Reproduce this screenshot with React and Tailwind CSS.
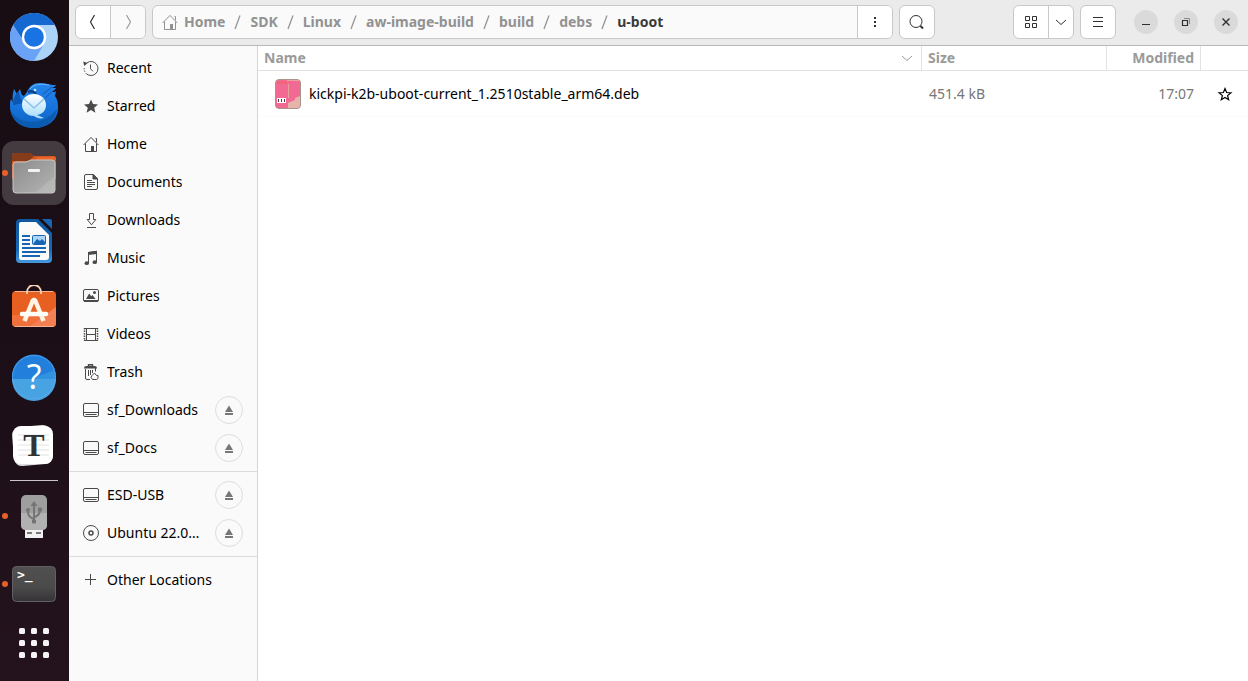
import { useState } from 'react';

function Icon({ children, className = '' }) {
  return (
    <svg
      width="16"
      height="16"
      viewBox="0 0 16 16"
      fill="none"
      stroke="currentColor"
      className={`shrink-0 ${className}`}
      aria-hidden="true"
    >
      {children}
    </svg>
  );
}

/* ---------- sidebar icons ---------- */

const RecentIcon = () => (
  <Icon>
    <path d="M4.2 2.6A7 7 0 1 1 3.4 13.8" />
    <path d="M1.2 8a7 7 0 0 0 2 5.6" strokeDasharray="1.4 1.2" />
    <path d="M.2 1.6 4.8 3 1.2 6z" fill="currentColor" stroke="none" />
    <path d="M7.5 4.5v4.2l2.4 2.6" />
  </Icon>
);

const StarIcon = () => (
  <Icon>
    <path d="m8 1.4 2 4.7 5 .4-3.8 3.3 1.2 4.9L8 12.1l-4.4 2.6 1.2-4.9L1 6.5l5-.4z" fill="currentColor" stroke="none" />
  </Icon>
);

const HomeIcon = () => (
  <Icon>
    <path d="M.6 9 8 1.4 15.4 9M2.5 7.5v8h11v-8M12.5 2.5h1v4" />
    <path d="M8 10h3v5.5H8z" fill="currentColor" stroke="none" />
  </Icon>
);

const DocumentsIcon = () => (
  <Icon>
    <path d="M3 .5h7.5l4 4V14q0 1.5-1.5 1.5H3q-1.5 0-1.5-1.5V2Q1.5.5 3 .5z" />
    <path d="M10 .5V5h4.5z" fill="currentColor" />
    <path d="M4 6.5h5M4 8.5h8M4 10.5h8M4 12.5h5" />
  </Icon>
);

const DownloadsIcon = () => (
  <Icon>
    <path d="M6.5 1.5h4v6h2.3l-4.3 5.3-4.3-5.3h2.3zM4 15.5h9" />
  </Icon>
);

const MusicIcon = () => (
  <Icon>
    <path d="M5.5 13V2.5l8-1V12" />
    <path d="M5 2 14 .8V4L5 5z" fill="currentColor" stroke="none" />
    <ellipse cx="3.8" cy="13.2" rx="2.2" ry="1.9" fill="currentColor" stroke="none" />
    <ellipse cx="11.8" cy="12.2" rx="2.2" ry="1.9" fill="currentColor" stroke="none" />
  </Icon>
);

const PicturesIcon = () => (
  <Icon>
    <rect x=".5" y="1.5" width="15" height="12" rx="1.5" />
    <path d="M1 12h14v2H1z" fill="currentColor" stroke="none" />
    <path d="m3 11 3.2-5.5 2 2.8L9.500 7l3 4z" fill="currentColor" stroke="none" />
    <circle cx="11.5" cy="4.5" r="1.5" fill="currentColor" stroke="none" />
  </Icon>
);

const VideosIcon = () => (
  <Icon>
    <path d="M1 2.5h14M1 14.5h14M3.5 2.5v12M12.5 2.5v12M3.5 8.5h9" />
    <path d="M1.5 2v13M14.5 2v13" strokeWidth="1.5" strokeDasharray="1.5 1" />
  </Icon>
);

const TrashIcon = () => (
  <Icon>
    <path d="M5.5 2.5V.8h4v1.7" strokeWidth="1.4" />
    <path d="M1 4q0-2 2.5-2h8Q14 2 14 4v.5H1z" fill="currentColor" stroke="none" />
    <path d="M2.5 5v9q0 1.5 1.5 1.5h3M12.5 4v3.5M5.5 6v6M7.5 6v5M9.5 6v3" />
    <path d="M9 11.5 11.5 9l2 2.5H15v3l-1.5 1h-4l-1.5-2z" />
  </Icon>
);

const DriveIcon = () => (
  <Icon>
    <rect x=".5" y="1.5" width="15" height="13" rx="1.5" />
    <path d="M1 10.5h14M2.5 12.5h11" />
  </Icon>
);

const DiscIcon = () => (
  <Icon>
    <circle cx="8" cy="8" r="7.5" />
    <circle cx="8" cy="8" r="2" strokeWidth="1.5" />
  </Icon>
);

const PlusIcon = () => (
  <Icon>
    <path d="M7.5 2v11M2 7.5h11" />
  </Icon>
);

const EjectIcon = () => (
  <Icon>
    <path d="M8 3.5 12 10H4zM4 11h8v2H4z" fill="currentColor" stroke="none" />
  </Icon>
);

/* ---------- dock icons ---------- */

const ChromiumIcon = () => (
  <svg width="48" height="48" viewBox="0 0 48 48" aria-hidden="true">
    <circle cx="24" cy="24" r="24" fill="#abd3f7" />
    <path d="M3.2 12 14 30l10.5 6.5L34 31 24 48A24 24 0 0 1 3.2 12z" fill="#6aa2f5" />
    <path d="M3.2 12A24 24 0 0 1 44.8 12H24L14 29z" fill="#1568d0" />
    <circle cx="24" cy="24" r="12.2" fill="#fff" />
    <circle cx="24" cy="24" r="9.8" fill="#1a73e3" />
  </svg>
);

const ThunderbirdIcon = () => (
  <svg width="48" height="48" viewBox="0 0 48 48" aria-hidden="true">
    <defs>
      <linearGradient id="bird" x1="0" y1="0" x2="0" y2="1">
        <stop offset="0" stopColor="#2585ea" />
        <stop offset=".55" stopColor="#1673dc" />
        <stop offset="1" stopColor="#0f62c0" />
      </linearGradient>
      <linearGradient id="mail" x1="0" y1="0" x2="0" y2="1">
        <stop offset="0" stopColor="#fff" />
        <stop offset="1" stopColor="#a4dcfb" />
      </linearGradient>
    </defs>
    <path
      d="M14 15c3-3 3-6 7-10 5-4 11-3 17-2 3 1 6 1 8 1-1 2-3 2-4 3h4c-1 2-3 3-4 4 3 0 3 0 4-1l-1 5c3 4 3 8 3 12 0 12-10 20-24 20C10 47 0 38 0 25c0-3 0-5 1-7l2 3c-1-5 0-10 1-13l3 5 3-5c1 3 1 6 4 7z"
      fill="url(#bird)"
    />
    <path d="M1 30c6 12 30 18 46-2-2 12-11 19-23 19S3 41 1 30z" fill="#0b5bb0" />
    <path d="M3 24C3 18 6 12 9 10c0 5 2 9 5 12" fill="#0c57b3" />
    <path d="M20 8c5-6 12-5 19-4" fill="none" stroke="#68b6f8" />
    <path d="m33 13 9-7M35 17l9-8" stroke="#1058b3" />
    <path d="M18 11q5-2 8 2" fill="none" stroke="#0d438a" strokeWidth="2.5" />
    <circle cx="25" cy="9" r="1.3" fill="#c9e9ff" />
    <path d="M12 24c0-7 5-11 12-11s12 5 12 11c0 5-3 9-9 10l7 3c-4 1-7 0-10-2-7 0-12-5-12-11z" fill="url(#mail)" />
    <path d="m14 18 10 9 10-9" fill="none" stroke="#8fc0e6" strokeWidth="1.5" />
  </svg>
);

const FilesIcon = () => (
  <svg width="48" height="48" viewBox="0 0 48 48" aria-hidden="true">
    <defs>
      <linearGradient id="folder" x1="0" y1="0" x2="1" y2="1">
        <stop offset="0" stopColor="#8c8c8c" />
        <stop offset="1" stopColor="#b4b4b4" />
      </linearGradient>
    </defs>
    <path d="M5 4h15l4 3h20q2 0 2 3v20H2V7q0-3 3-3z" fill="#d9551d" />
    <path d="M5 4h15l4 3-5 5H2V7q0-3 3-3z" fill="#843c1b" />
    <path d="M28 8h16q2 0 2 3H25z" fill="#e9662b" />
    <path d="M6 13h10l5-2h21q3 0 3 3v27q0 3-3 3H6q-3 0-3-3V16q0-3 3-3z" fill="url(#folder)" stroke="#c8c8c6" />
    <path d="M44 28 26 43h15q3 0 3-3z" fill="#c6c6c6" opacity=".4" />
    <rect x="18" y="20" width="12" height="3" rx="1" fill="#f2f2f0" />
  </svg>
);

const WriterIcon = () => (
  <svg width="48" height="48" viewBox="0 0 48 48" aria-hidden="true">
    <defs>
      <linearGradient id="writer" x1="0" y1="0" x2="0" y2="1">
        <stop offset="0" stopColor="#0e569d" />
        <stop offset=".7" stopColor="#1769b8" />
        <stop offset="1" stopColor="#459ae0" />
      </linearGradient>
    </defs>
    <path d="M10 2h18l14 14v26q0 4-4 4H10q-4 0-4-4V6q0-4 4-4z" fill="url(#writer)" />
    <path d="M32 2h8q2 0 2 2v8z" fill="#1765b0" />
    <path d="M11 5h15l13 13v22q0 3-3 3H11q-2 0-2-3V7q0-2 2-2z" fill="#fafafa" />
    <path d="M12 19h8M12 23h8M12 27h8M12 31h24M12 35h24M12 39h18" stroke="#1766b3" strokeWidth="2" />
    <rect x="22.5" y="18.5" width="13" height="9" rx="1" fill="#abd5f6" stroke="#1766b3" />
    <path d="m23 27 4-5 3 2 2-2 3 3v2z" fill="#1766b3" />
  </svg>
);

const AppCenterIcon = () => (
  <svg width="48" height="48" viewBox="0 0 48 48" aria-hidden="true">
    <rect x="2" y="6" width="44" height="36" rx="4" fill="#e85f22" />
    <path d="M46 22 19 42h23q4 0 4-4z" fill="#f28058" />
    <path d="M2 30h44v8q0 4-4 4H6q-4 0-4-4z" fill="#f47d50" opacity=".55" />
    <path d="M5 41.5h38M5 6.5h38" stroke="#f7b193" />
    <path d="M17 9V7a7 7 0 0 1 14 0v2" fill="none" stroke="#f6d3b7" strokeWidth="1.8" />
    <path d="m14.500 36 8.500-21h2l8.500 21" fill="none" stroke="#fff4e4" strokeWidth="4.500" strokeLinejoin="bevel" />
    <path d="M12 29h24" stroke="#fffdf8" strokeWidth="4.500" strokeLinecap="round" />
  </svg>
);

const HelpIcon = () => (
  <svg width="48" height="48" viewBox="0 0 48 48" aria-hidden="true">
    <circle cx="24" cy="24" r="22" fill="#3193df" />
    <path d="M3 17A22 22 0 0 1 45 17L21 26 4 32a22 22 0 0 1-1-15z" fill="#2280dc" />
    <path d="M2 26h44a22 22 0 0 1-44 0z" fill="#48a3e2" />
    <circle cx="24" cy="24" r="21.5" fill="none" stroke="#62aeea" opacity=".6" />
    <text x="24" y="36" textAnchor="middle" fontSize="34" fill="#fff" fontFamily="Open Sans, sans-serif">?</text>
  </svg>
);

const TyporaIcon = () => (
  <svg width="48" height="48" viewBox="0 0 48 48" aria-hidden="true">
    <rect x="3" y="5" width="39" height="39" rx="8" fill="#dedede" transform="rotate(-5 23 25)" />
    <rect x="3" y="5" width="40" height="38" rx="8" fill="#fff" />
    <path d="M8 14h31M8 19h31M8 24h31M8 29h31M8 34h31" stroke="#ebebeb" strokeWidth="1.5" />
    <text x="24" y="35" textAnchor="middle" fontSize="32" fontWeight="700" fill="#333" fontFamily="Liberation Serif, serif">T</text>
  </svg>
);

const UsbIcon = () => (
  <svg width="48" height="48" viewBox="0 0 48 48" aria-hidden="true">
    <rect x="15" y="36" width="18" height="10" fill="#f1f1f1" />
    <path d="M17 41h5M26 41h5" stroke="#777" strokeWidth="2" />
    <rect x="11" y="3" width="26" height="35" rx="5" fill="#9e9e9e" />
    <path d="M11 21h26v12q0 5-5 5H16q-5 0-5-5z" fill="#b1b1b1" />
    <g fill="none" stroke="#757575" strokeWidth="2">
      <path d="M24 13v17M24 27q-6-2-6-7M24 25q5-1 6-6" />
      <path d="m20.5 14 3.5-5 3.5 5z" fill="#757575" stroke="none" />
      <circle cx="18" cy="18" r="2" fill="#757575" stroke="none" />
      <path d="M28.5 16h3v3h-3zM22.5 28h3v3h-3z" fill="#757575" strokeWidth="1" />
    </g>
  </svg>
);

const TerminalIcon = () => (
  <svg width="48" height="48" viewBox="0 0 48 48" aria-hidden="true">
    <defs>
      <linearGradient id="term" x1="0" y1="0" x2="0" y2="1">
        <stop offset="0" stopColor="#505050" />
        <stop offset=".6" stopColor="#4b4a4b" />
        <stop offset="1" stopColor="#353335" />
      </linearGradient>
    </defs>
    <rect x="2.5" y="6.5" width="43" height="35" rx="4" fill="url(#term)" stroke="#626062" />
    <text x="7" y="19" fontSize="13" fontWeight="700" fill="#fff" fontFamily="DejaVu Sans Mono, monospace">&gt;_</text>
  </svg>
);

const AppsIcon = () => (
  <svg width="48" height="48" viewBox="0 0 48 48" fill="#f4f2f3" aria-hidden="true">
    {[8, 20, 32].map((y) => [9, 21, 33].map((x) => <rect key={`${x}-${y}`} x={x} y={y} width="6" height="6" rx="1.5" />))}
  </svg>
);

const DebIcon = () => (
  <svg width="26" height="30" viewBox="0 0 26 30" className="shrink-0" aria-hidden="true">
    <rect x=".5" y=".5" width="25" height="29" rx="3.5" fill="#f26a94" stroke="#aa938a" />
    <path d="M13 29v-5l7-3v-2l5-2v9q0 3-3 3z" fill="#e5b5aa" />
    <path d="M13.5 5v14M12 1.5h12" stroke="#e9a39b" />
    <path d="M2 2h10v3H2z" fill="#f0657b" />
    <rect x="2" y="19" width="9" height="5" fill="#fff" />
    <path d="M3.5 20v3M6.5 20v3M9.5 20v3" stroke="#444" />
  </svg>
);

const dockApps = [
  { name: 'Chromium', icon: ChromiumIcon },
  { name: 'Thunderbird', icon: ThunderbirdIcon },
  { name: 'Files', icon: FilesIcon, running: true, active: true },
  { name: 'LibreOffice Writer', icon: WriterIcon },
  { name: 'App Center', icon: AppCenterIcon },
  { name: 'Help', icon: HelpIcon },
  { name: 'Typora', icon: TyporaIcon },
];

const dockRunning = [
  { name: 'USB drive', icon: UsbIcon, running: true },
  { name: 'Terminal', icon: TerminalIcon, running: true },
];

const places = [
  { name: 'Recent', icon: RecentIcon },
  { name: 'Starred', icon: StarIcon },
  { name: 'Home', icon: HomeIcon },
  { name: 'Documents', icon: DocumentsIcon },
  { name: 'Downloads', icon: DownloadsIcon },
  { name: 'Music', icon: MusicIcon },
  { name: 'Pictures', icon: PicturesIcon },
  { name: 'Videos', icon: VideosIcon },
  { name: 'Trash', icon: TrashIcon },
  { name: 'sf_Downloads', icon: DriveIcon, eject: true },
  { name: 'sf_Docs', icon: DriveIcon, eject: true },
];

const devices = [
  { name: 'ESD-USB', icon: DriveIcon, eject: true },
  { name: 'Ubuntu 22.0…', icon: DiscIcon, eject: true },
];

const crumbs = ['Home', 'SDK', 'Linux', 'aw-image-build', 'build', 'debs', 'u-boot'];

const files = [{ name: 'kickpi-k2b-uboot-current_1.2510stable_arm64.deb', size: '451.4 kB', modified: '17:07' }];

function DockItem({ app }) {
  return (
    <button
      aria-label={app.name}
      className={`relative flex size-16 shrink-0 items-center justify-center rounded-xl ${app.active ? 'bg-[#433b40]' : ''}`}
    >
      {app.running && <span className="absolute top-1/2 left-0 size-1.5 -translate-y-1/2 rounded-full bg-[#e95f28]" />}
      <app.icon />
    </button>
  );
}

function Dock() {
  return (
    <nav
      aria-label="Dock"
      className="flex shrink-0 flex-col gap-1 bg-linear-to-b from-[#190d14] via-[#1b0e16] to-[#24131d] pt-[5px] pr-[3px] pl-[2px]"
    >
      {dockApps.map((app) => (
        <DockItem key={app.name} app={app} />
      ))}
      <hr className="-mt-px -mb-px ml-2 w-12 border-[#c9c5c7]" />
      {dockRunning.map((app) => (
        <DockItem key={app.name} app={app} />
      ))}
      <button aria-label="Show Apps" className="flex h-12 w-16 shrink-0 items-center justify-center">
        <AppsIcon />
      </button>
    </nav>
  );
}

function Place({ place }) {
  return (
    <li className="flex h-[38px] items-center px-[14px]">
      <a href="#" className="flex min-w-0 flex-1 items-center gap-2">
        <span className="text-[#4a4a4a]">
          <place.icon />
        </span>
        <span className="truncate">{place.name}</span>
      </a>
      {place.eject && (
        <button
          aria-label={`Eject ${place.name}`}
          className="flex size-7 shrink-0 items-center justify-center rounded-full border border-[#dedede] text-[#777]"
        >
          <EjectIcon />
        </button>
      )}
    </li>
  );
}

function Sidebar() {
  return (
    <aside className="w-[189px] shrink-0 border-r border-[#d5d5d5] bg-[#fafafa] pt-[3px]">
      <ul>
        {places.map((p) => (
          <Place key={p.name} place={p} />
        ))}
      </ul>
      <ul className="mt-1 border-t border-[#dcdcdc] pt-1">
        {devices.map((p) => (
          <Place key={p.name} place={p} />
        ))}
      </ul>
      <ul className="mt-1 border-t border-[#dcdcdc] pt-1">
        <Place place={{ name: 'Other Locations', icon: PlusIcon }} />
      </ul>
    </aside>
  );
}

function ToolButton({ label, className = '', children }) {
  return (
    <button aria-label={label} className={`flex h-full items-center justify-center ${className}`}>
      {children}
    </button>
  );
}

const group = 'flex h-[34px] shrink-0 overflow-hidden rounded-md border border-[#c8c8c8] bg-white';
const windowButton = 'flex size-6 items-center justify-center rounded-full bg-[#dadada]';

function Toolbar() {
  return (
    <header className="flex h-[46px] items-center border-b border-[#b9b9b9] bg-[#ebebeb] pb-px pl-1.5 text-[#303030]">
      <div className={group}>
        <ToolButton label="Back" className="w-[34px]">
          <Icon><path d="M9.5 1 5.5 8l4 7" strokeWidth="1.2" /></Icon>
        </ToolButton>
        <ToolButton label="Forward" className="w-[35px] border-l border-[#c8c8c8] bg-[#fafafa] text-[#9b9b9b]">
          <Icon><path d="m6.5 1 4 7-4 7" strokeWidth="1.2" /></Icon>
        </ToolButton>
      </div>

      <div className="ml-1.5 flex h-[34px] min-w-0 flex-1 overflow-hidden rounded-md border border-[#c8c8c8] bg-[#fafafa]">
        <ol className="flex min-w-0 flex-1 items-center overflow-hidden pl-[9px] font-bold whitespace-nowrap text-[#929292]">
          {crumbs.map((c, i) => (
            <li key={c} className="flex items-center">
              {i > 0 && (
                <svg width="25" height="16" viewBox="0 0 25 16" fill="none" stroke="#969696" aria-hidden="true">
                  <path d="M15 1.5 10 15" strokeWidth="1.3" />
                </svg>
              )}
              <a href="#" className={`flex items-center gap-1.5 ${i === crumbs.length - 1 ? 'text-[#3a3a3a]' : ''}`}>
                {i === 0 && <HomeIcon />}
                {c}
              </a>
            </li>
          ))}
        </ol>
        <ToolButton label="Folder menu" className="w-[35px] border-l border-[#c8c8c8] bg-white">
          <Icon>
            <path d="M7 3h2v2H7zM7 7h2v2H7zM7 11h2v2H7z" fill="currentColor" stroke="none" />
          </Icon>
        </ToolButton>
      </div>

      <div className={`${group} ml-1.5`}>
        <ToolButton label="Search" className="w-[34px]">
          <Icon>
            <circle cx="7" cy="7.5" r="6" />
            <path d="m11.5 12 2.5 2.5" strokeWidth="2" />
          </Icon>
        </ToolButton>
      </div>

      <div className={`${group} ml-[78px]`}>
        <ToolButton label="Grid view" className="w-[34px]">
          <Icon>
            <path d="M2.5 2.5h4v4h-4zM9.5 2.5h4v4h-4zM2.5 9.5h4v4h-4zM9.5 9.5h4v4h-4z" />
          </Icon>
        </ToolButton>
        <ToolButton label="View options" className="w-[25px] border-l border-[#c8c8c8]">
          <Icon><path d="m3 6 5 4.5L13 6" /></Icon>
        </ToolButton>
      </div>

      <div className={`${group} ml-1.5`}>
        <ToolButton label="Main menu" className="w-[34px]">
          <Icon><path d="M3 3.5h10M3 7.5h10M3 12.5h10" /></Icon>
        </ToolButton>
      </div>

      <div className="mr-2.5 ml-[18px] flex shrink-0 gap-4">
        <button aria-label="Minimize" className={windowButton}>
          <Icon><path d="M4 10.5h8" /></Icon>
        </button>
        <button aria-label="Restore" className={windowButton}>
          <Icon>
            <path d="M6 4.5h5.5V10" stroke="#8a8a8a" />
            <path d="M4.5 6.5h5v5h-5z" strokeWidth="1.2" />
          </Icon>
        </button>
        <button aria-label="Close" className={windowButton}>
          <Icon><path d="m4.5 4.5 7 7M11.5 4.5l-7 7" strokeWidth="1.4" /></Icon>
        </button>
      </div>
    </header>
  );
}

function FileTable() {
  const [starred, setStarred] = useState({});

  return (
    <main className="min-w-0 flex-1 bg-white">
      <table className="w-full table-fixed border-separate border-spacing-0 text-left">
        <thead className="text-[#9a9a9a]">
          <tr className="h-[25px]">
            <th className="border-r border-b border-[#e3e3e3] p-0 px-1.5">
              <span className="flex items-center justify-between leading-6">
                Name
                <Icon><path d="m3 6 5 4.5L13 6" /></Icon>
              </span>
            </th>
            <th className="w-[185px] border-r border-b border-[#e3e3e3] p-0 pl-1.5 leading-6">Size</th>
            <th className="w-[94px] border-r border-b border-[#e3e3e3] p-0 pr-1.5 text-right leading-6">Modified</th>
            <th className="w-[47px] border-b border-[#e3e3e3] p-0" aria-label="Starred" />
          </tr>
        </thead>
        <tbody>
          {files.map((f) => (
            <tr key={f.name} className="h-[46px]">
              <td className="border-b border-[#fbfbfb] p-0 pl-[17px]">
                <span className="flex items-center gap-2">
                  <DebIcon />
                  <span className="truncate">{f.name}</span>
                </span>
              </td>
              <td className="border-b border-[#fbfbfb] p-0 pl-[7px] text-[#777]">{f.size}</td>
              <td className="border-b border-[#fbfbfb] p-0 pr-[7px] text-right text-[#777]">{f.modified}</td>
              <td className="border-b border-[#fbfbfb] p-0">
                <button
                  aria-label="Star"
                  className="mx-auto flex"
                  onClick={() => setStarred({ ...starred, [f.name]: !starred[f.name] })}
                >
                  <Icon>
                    <path
                      d="m8 2.5 1.6 4 4.4.3-3.4 2.8 1.1 4.2L8 11.5l-3.7 2.3 1.1-4.2L2 6.800l4.400-.3z"
                      fill={starred[f.name] ? 'currentColor' : 'none'}
                      strokeWidth="1.2"
                    />
                  </Icon>
                </button>
              </td>
            </tr>
          ))}
        </tbody>
      </table>
    </main>
  );
}

export default function App() {
  return (
    <div className="flex min-h-screen font-['Noto_Sans',sans-serif] text-sm text-black">
      <Dock />
      <div className="flex min-w-0 flex-1 flex-col">
        <Toolbar />
        <div className="flex flex-1">
          <Sidebar />
          <FileTable />
        </div>
      </div>
    </div>
  );
}
